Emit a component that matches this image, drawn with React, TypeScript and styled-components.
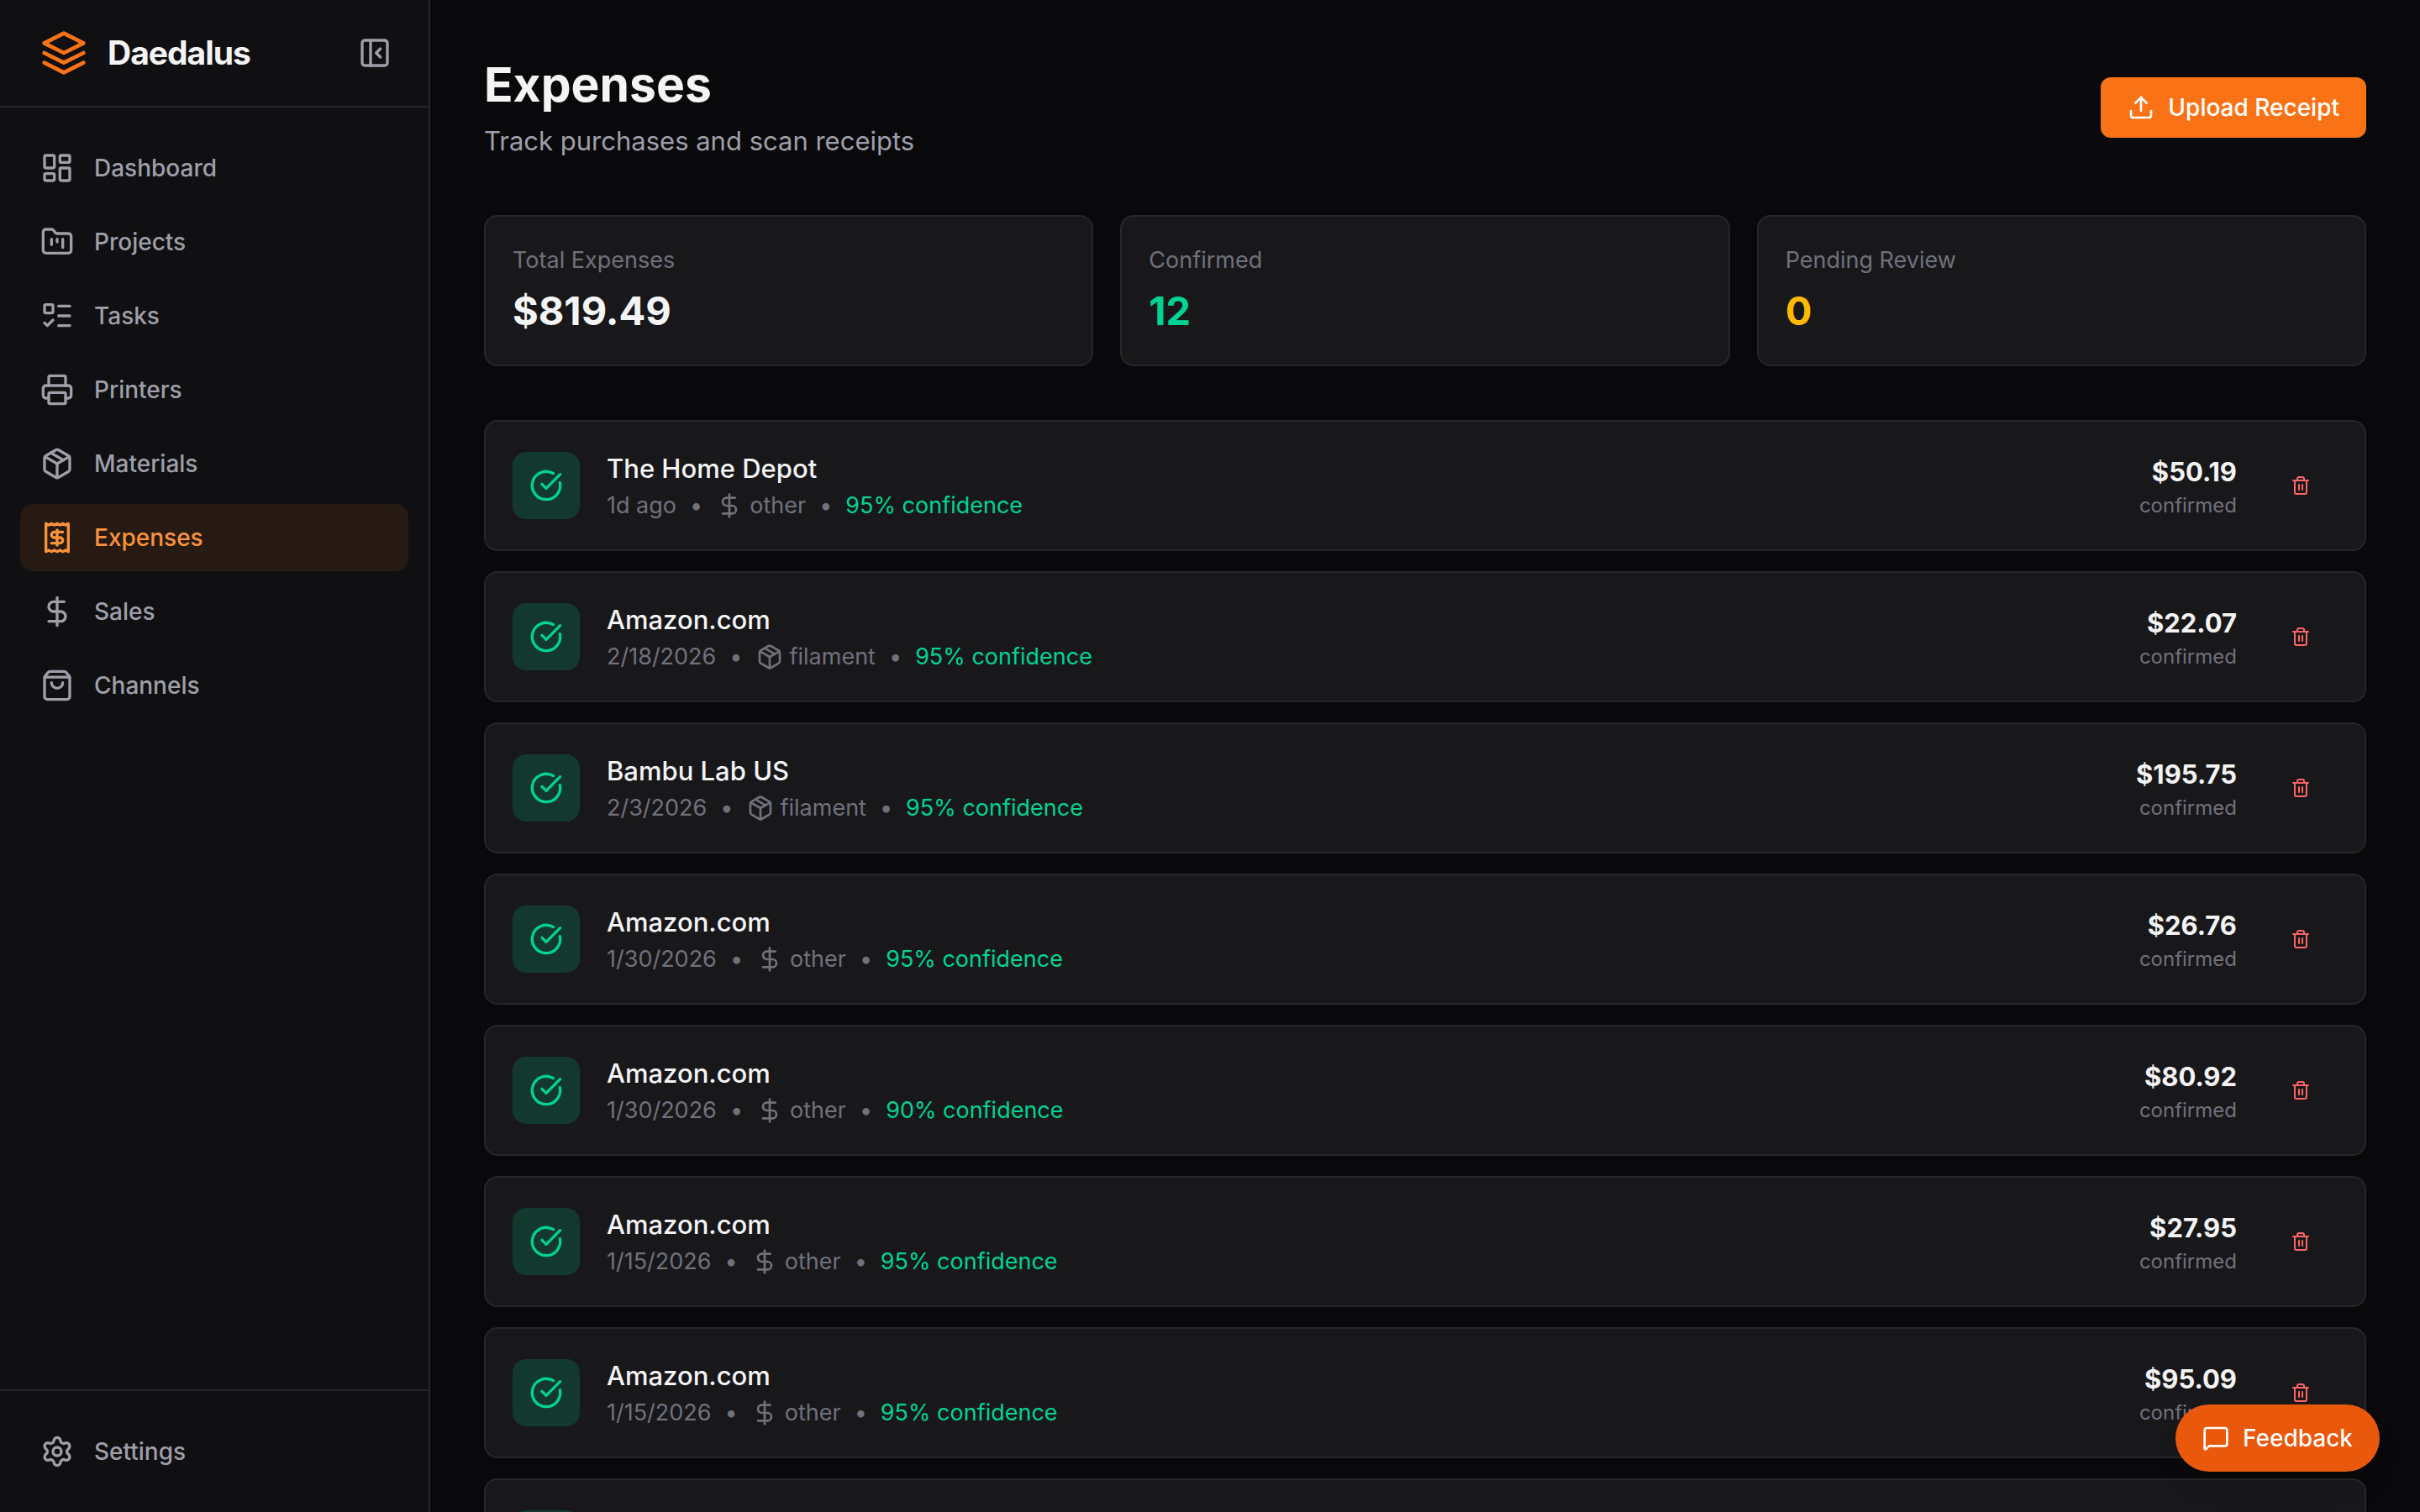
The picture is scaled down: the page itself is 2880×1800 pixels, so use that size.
import React from "react";
import styled, { createGlobalStyle, css } from "styled-components";
import {
  CircleCheckBig,
  DollarSign,
  FolderKanban,
  LayoutDashboard,
  ListTodo,
  MessageSquare,
  Package,
  PanelLeftClose,
  Printer,
  Receipt,
  Settings,
  ShoppingBag,
  Trash2,
  Upload,
  type LucideIcon,
} from "lucide-react";

const color = {
  page: "#09090b",
  sidebar: "#101012",
  card: "#18181b",
  border: "#27272a",
  text: "#f4f4f5",
  soft: "#9f9fa9",
  muted: "#71717b",
  brand: "#f97316",
  brandLight: "#fb923c",
  brandDark: "#ea580c",
  success: "#00d492",
  warning: "#ffb900",
  danger: "#ff6467",
};

const GlobalStyle = createGlobalStyle`
  *, *::before, *::after { box-sizing: border-box; }
  body {
    margin: 0;
    background: ${color.page};
    color: ${color.text};
    font-family: Inter, "Liberation Sans", sans-serif;
    font-size: 27px;
    line-height: 40px;
    -webkit-font-smoothing: antialiased;
  }
  h1, h2, p, ul, dl, dd { margin: 0; padding: 0; }
  ul { list-style: none; }
  button { font: inherit; border: 0; cursor: pointer; }
  svg { flex-shrink: 0; display: block; }
`;

const Shell = styled.div`
  display: grid;
  grid-template-columns: 512px minmax(0, 1fr);
  height: 100vh;
`;

const Sidebar = styled.aside`
  display: flex;
  flex-direction: column;
  background: ${color.sidebar};
  border-right: 2px solid ${color.border};
`;

const SidebarHeader = styled.div`
  display: flex;
  align-items: center;
  justify-content: space-between;
  height: 128px;
  padding: 0 32px 0 48px;
  border-bottom: 2px solid ${color.border};
`;

const Brand = styled.a`
  display: flex;
  align-items: center;
  gap: 24px;
  color: ${color.text};
  font-size: 39px;
  font-weight: 700;
  line-height: 56px;
  letter-spacing: -1px;
  text-decoration: none;
`;

const BrandMark = styled.svg`
  width: 56px;
  height: 56px;
  fill: none;
  stroke: ${color.brand};
  stroke-width: 2;
  stroke-linecap: round;
  stroke-linejoin: round;
`;

const CollapseButton = styled.button`
  padding: 12px;
  border-radius: 16px;
  background: transparent;
  color: ${color.soft};
`;

const Nav = styled.nav`
  flex: 1;
  padding: 32px 24px;
`;

const NavList = styled.ul`
  display: flex;
  flex-direction: column;
  gap: 8px;
`;

const NavLink = styled.a<{ $active?: boolean }>`
  display: flex;
  align-items: center;
  gap: 24px;
  padding: 20px 24px;
  border-radius: 16px;
  color: ${color.soft};
  font-size: 28px;
  font-weight: 500;
  text-decoration: none;

  ${({ $active }) =>
    $active &&
    css`
      background: rgba(249, 115, 22, 0.1);
      color: ${color.brandLight};
    `}
`;

const SidebarFooter = styled.div`
  padding: 32px 24px;
  border-top: 2px solid ${color.border};
`;

const Main = styled.main`
  display: flex;
  flex-direction: column;
  gap: 64px;
  padding: 64px;
  overflow-y: auto;
  scrollbar-width: none;
`;

const PageHeader = styled.header`
  display: flex;
  align-items: center;
  justify-content: space-between;
`;

const Title = styled.h1`
  font-size: 57px;
  font-weight: 700;
  line-height: 74px;
`;

const Subtitle = styled.p`
  margin-top: 6px;
  color: ${color.soft};
  font-size: 31px;
  line-height: 48px;
`;

const UploadButton = styled.button`
  display: flex;
  align-items: center;
  gap: 16px;
  padding: 16px 32px;
  border-radius: 12px;
  background: ${color.brand};
  color: #fff;
  font-size: 28px;
  font-weight: 500;
`;

const Stats = styled.dl`
  display: grid;
  grid-template-columns: repeat(3, 1fr);
  gap: 32px;
`;

const card = css`
  padding: 32px;
  border: 2px solid ${color.border};
  border-radius: 16px;
  background: ${color.card};
`;

const StatCard = styled.div`
  ${card}
`;

const StatLabel = styled.dt`
  color: ${color.muted};
`;

const StatValue = styled.dd<{ $color: string }>`
  && { margin-top: 8px; }
  color: ${({ $color }) => $color};
  font-size: 47px;
  font-weight: 700;
  line-height: 64px;
`;

const ExpenseList = styled.ul`
  display: flex;
  flex-direction: column;
  gap: 24px;
`;

const ExpenseItem = styled.li`
  ${card}
  display: flex;
  align-items: center;
  gap: 32px;
  min-height: 156px;
`;

const StatusBadge = styled.span`
  padding: 20px;
  border-radius: 16px;
  background: rgba(0, 188, 125, 0.2);
  color: ${color.success};
`;

const Details = styled.div`
  flex: 1;
  min-width: 0;
`;

const Merchant = styled.h2`
  font-size: 31px;
  font-weight: 500;
  line-height: 48px;
`;

const Meta = styled.div`
  display: flex;
  align-items: center;
  gap: 16px;
  color: ${color.muted};
`;

const Category = styled.span`
  display: flex;
  align-items: center;
  gap: 8px;
`;

const Confidence = styled.span`
  color: ${color.success};
`;

const Totals = styled.div`
  text-align: right;
`;

const Amount = styled.p`
  font-size: 31px;
  font-weight: 700;
  line-height: 48px;
`;

const Status = styled.p`
  color: ${color.muted};
  font-size: 24px;
  line-height: 32px;
`;

const DeleteButton = styled.button`
  padding: 20px 32px;
  border-radius: 12px;
  background: transparent;
  color: ${color.danger};
`;

const FeedbackButton = styled.button`
  position: fixed;
  right: 48px;
  bottom: 48px;
  display: flex;
  align-items: center;
  gap: 16px;
  padding: 20px 32px;
  border-radius: 40px;
  background: ${color.brandDark};
  color: #fff;
  font-size: 28px;
  font-weight: 500;
  box-shadow: 0 20px 30px -6px rgba(0, 0, 0, 0.1), 0 8px 12px -8px rgba(0, 0, 0, 0.1);
`;

const navItems: { label: string; icon: LucideIcon; active?: boolean }[] = [
  { label: "Dashboard", icon: LayoutDashboard },
  { label: "Projects", icon: FolderKanban },
  { label: "Tasks", icon: ListTodo },
  { label: "Printers", icon: Printer },
  { label: "Materials", icon: Package },
  { label: "Expenses", icon: Receipt, active: true },
  { label: "Sales", icon: DollarSign },
  { label: "Channels", icon: ShoppingBag },
];

const stats = [
  { label: "Total Expenses", value: "$819.49", color: color.text },
  { label: "Confirmed", value: "12", color: color.success },
  { label: "Pending Review", value: "0", color: color.warning },
];

type Expense = {
  merchant: string;
  date: string;
  category: "other" | "filament";
  confidence: number;
  amount: string;
};

const expenses: Expense[] = [
  { merchant: "The Home Depot", date: "1d ago", category: "other", confidence: 95, amount: "$50.19" },
  { merchant: "Amazon.com", date: "2/18/2026", category: "filament", confidence: 95, amount: "$22.07" },
  { merchant: "Bambu Lab US", date: "2/3/2026", category: "filament", confidence: 95, amount: "$195.75" },
  { merchant: "Amazon.com", date: "1/30/2026", category: "other", confidence: 95, amount: "$26.76" },
  { merchant: "Amazon.com", date: "1/30/2026", category: "other", confidence: 90, amount: "$80.92" },
  { merchant: "Amazon.com", date: "1/15/2026", category: "other", confidence: 95, amount: "$27.95" },
  { merchant: "Amazon.com", date: "1/15/2026", category: "other", confidence: 95, amount: "$95.09" },
];

const categoryIcons: Record<Expense["category"], LucideIcon> = {
  other: DollarSign,
  filament: Package,
};

function ExpenseRow({ expense }: { expense?: Expense }) {
  const CategoryIcon = expense && categoryIcons[expense.category];
  return (
    <ExpenseItem>
      <StatusBadge>
        <CircleCheckBig size={40} />
      </StatusBadge>
      {expense && CategoryIcon && (
        <>
          <Details>
            <Merchant>{expense.merchant}</Merchant>
            <Meta>
              <span>{expense.date}</span>
              <span>•</span>
              <Category>
                <CategoryIcon size={32} />
                {expense.category}
              </Category>
              <span>•</span>
              <Confidence>{expense.confidence}% confidence</Confidence>
            </Meta>
          </Details>
          <Totals>
            <Amount>{expense.amount}</Amount>
            <Status>confirmed</Status>
          </Totals>
          <DeleteButton type="button" aria-label="Delete expense">
            <Trash2 size={24} />
          </DeleteButton>
        </>
      )}
    </ExpenseItem>
  );
}

export default function App() {
  return (
    <>
      <GlobalStyle />
      <Shell>
        <Sidebar>
          <SidebarHeader>
            <Brand href="#">
              <BrandMark viewBox="0 0 24 24" aria-hidden="true">
                <path d="M12 2 2 7l10 5 10-5Z" />
                <path d="m2 12 10 5 10-5" />
                <path d="m2 17 10 5 10-5" />
              </BrandMark>
              Daedalus
            </Brand>
            <CollapseButton type="button" aria-label="Collapse sidebar">
              <PanelLeftClose size={40} />
            </CollapseButton>
          </SidebarHeader>
          <Nav>
            <NavList>
              {navItems.map(({ label, icon: Icon, active }) => (
                <li key={label}>
                  <NavLink href="#" $active={active} aria-current={active ? "page" : undefined}>
                    <Icon size={40} />
                    {label}
                  </NavLink>
                </li>
              ))}
            </NavList>
          </Nav>
          <SidebarFooter>
            <NavLink href="#">
              <Settings size={40} />
              Settings
            </NavLink>
          </SidebarFooter>
        </Sidebar>

        <Main>
          <PageHeader>
            <div>
              <Title>Expenses</Title>
              <Subtitle>Track purchases and scan receipts</Subtitle>
            </div>
            <UploadButton type="button">
              <Upload size={32} />
              Upload Receipt
            </UploadButton>
          </PageHeader>

          <Stats>
            {stats.map((stat) => (
              <StatCard key={stat.label}>
                <StatLabel>{stat.label}</StatLabel>
                <StatValue $color={stat.color}>{stat.value}</StatValue>
              </StatCard>
            ))}
          </Stats>

          <ExpenseList>
            {expenses.map((expense, index) => (
              <ExpenseRow key={index} expense={expense} />
            ))}
            <ExpenseRow />
          </ExpenseList>
        </Main>
      </Shell>
      <FeedbackButton type="button">
        <MessageSquare size={32} />
        Feedback
      </FeedbackButton>
    </>
  );
}
